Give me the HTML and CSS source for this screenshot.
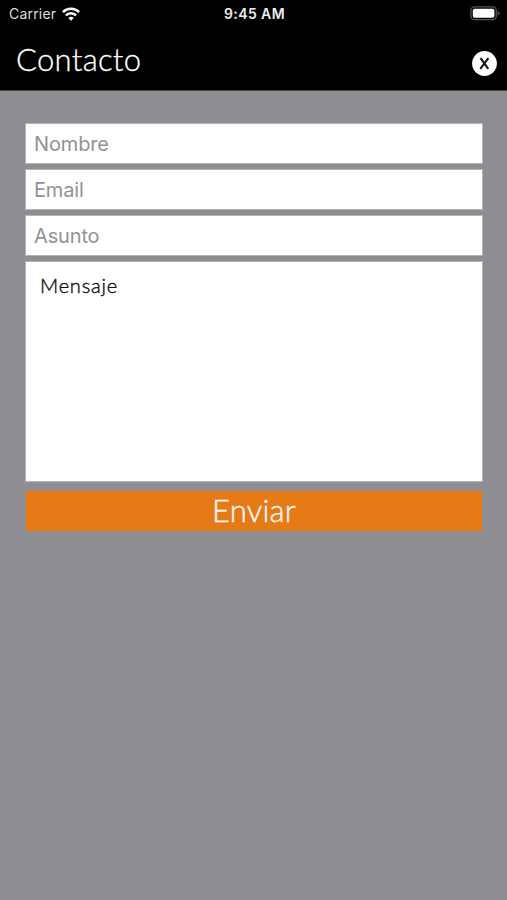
FILE: index.html
```html
<!DOCTYPE html>
<html lang="es">

<head>
    <meta charset="UTF-8">
    <meta name="viewport" content="width=device-width, initial-scale=1.0">
    <title>Contacto</title>
    <link rel="stylesheet" href="styles.css">
</head>

<body>
    <header>
        <div class="status-bar">
            <div class="carrier">
                <span>Carrier</span>
                <svg class="wifi" width="18" height="14" viewBox="0 0 18 14" fill="none" stroke="#fff" stroke-width="2.6">
                    <path d="M0.9 5.1a11.5 11.5 0 0 1 16.2 0" />
                    <path d="M3.9 8.4a7.2 7.2 0 0 1 10.2 0" />
                    <path d="M9 13.7L6.3 11a3.9 3.9 0 0 1 5.4 0z" fill="#fff" stroke="none" />
                </svg>
            </div>
            <span class="time">9:45 AM</span>
            <svg class="battery" width="30" height="15" viewBox="0 0 30 15">
                <rect x="0.9" y="0.9" width="25.4" height="12.8" rx="3.6" fill="none" stroke="#555" stroke-width="1.3" />
                <rect x="2.8" y="2.8" width="21.6" height="9" rx="1.8" fill="#fff" />
                <path d="M27.6 5v4.6q2-.8 2-2.3t-2-2.3z" fill="#555" />
            </svg>
        </div>
        <div class="title-bar">
            <h1>Contacto</h1>
            <button type="button" class="close" aria-label="Cerrar">
                <svg width="25" height="25" viewBox="0 0 25 25">
                    <circle cx="12.5" cy="12.5" r="12.4" fill="#fff" />
                    <path d="M8.5 7.1L16.3 17.8M16.4 7.1L8.3 17.8" stroke="#111" stroke-width="2" />
                </svg>
            </button>
        </div>
    </header>

    <form id="contact-form">
        <input type="text" name="nombre" placeholder="Nombre" aria-label="Nombre">
        <input type="email" name="email" placeholder="Email" aria-label="Email">
        <input type="text" name="asunto" placeholder="Asunto" aria-label="Asunto">
        <textarea name="mensaje" aria-label="Mensaje">Mensaje</textarea>
        <button type="submit" class="send">Enviar</button>
    </form>
</body>

</html>
```
FILE: styles.css
```css
* {
    margin: 0;
    padding: 0;
    box-sizing: border-box;
}

body {
    font-family: 'Lato', sans-serif;
    background-color: #8e8d92;
    min-height: 100vh;
}

header {
    background-color: #000;
    color: #fff;
    height: 91px;
    border-bottom: 1px solid #48484a;
}

/* Status bar */
.status-bar {
    display: grid;
    grid-template-columns: 1fr auto 1fr;
    align-items: center;
    height: 27px;
    padding: 0 7px 0 9px;
    font-family: 'Inter', sans-serif;
    font-size: 14px;
}

.carrier {
    display: flex;
    align-items: center;
    gap: 6px;
    color: #ddd;
    letter-spacing: 0.2px;
}

.time {
    font-weight: 600;
    color: #eee;
    letter-spacing: 0.4px;
}

.battery {
    justify-self: end;
}

/* Title */
.title-bar {
    display: flex;
    justify-content: space-between;
    padding: 12px 10px 0 16px;
}

h1 {
    font-size: 31px;
    font-weight: 300;
    line-height: 40px;
    letter-spacing: 0.3px;
    -webkit-text-stroke: 0.3px #fff;
}

.close {
    width: 25px;
    height: 25px;
    margin-top: 12px;
    background: none;
    border: none;
    cursor: pointer;
}

.close svg {
    display: block;
}

/* Form */
form {
    display: flex;
    flex-direction: column;
    padding: 32px 24px 0 25px;
}

input,
textarea {
    width: 100%;
    background-color: #fff;
    border: 1px solid #b4b4b7;
    border-radius: 0;
    outline: none;
}

input {
    height: 41px;
    margin-bottom: 5px;
    padding: 0 8px;
    font-family: 'Inter', sans-serif;
    font-size: 20px;
    letter-spacing: -0.15px;
}

input::placeholder {
    color: #929292;
    opacity: 1;
}

textarea {
    height: 221px;
    padding: 11px 14px;
    font-family: 'Lato', sans-serif;
    font-size: 20px;
    font-weight: 300;
    line-height: 24px;
    letter-spacing: 0.8px;
    color: #111;
    -webkit-text-stroke: 0.4px #111;
    resize: none;
}

.send {
    height: 40px;
    margin: 9px 1px 0;
    padding-bottom: 2px;
    background-color: #e67a17;
    color: #fff;
    font-family: 'Lato', sans-serif;
    font-size: 31px;
    font-weight: 300;
    line-height: 38px;
    letter-spacing: 0.2px;
    -webkit-text-stroke: 0.3px #fff;
    border: none;
    border-radius: 0;
    cursor: pointer;
}
```
